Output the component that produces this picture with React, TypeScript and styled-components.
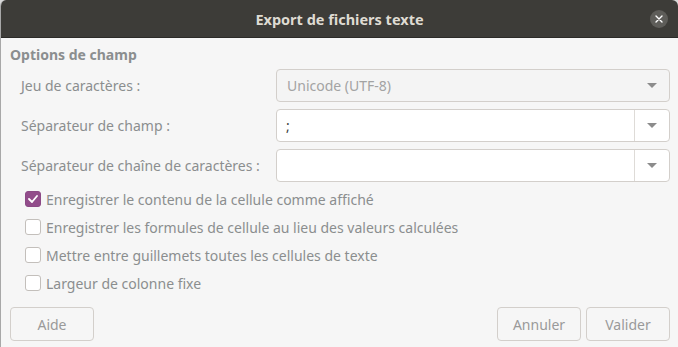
import React from 'react';
import styled, { createGlobalStyle } from 'styled-components';

const GlobalStyle = createGlobalStyle`
  html, body {
    margin: 0;
    padding: 0;
    background: #d9d9d9;
  }
  body {
    font-family: 'Noto Sans', 'DejaVu Sans', sans-serif;
    font-size: 14px;
  }
`;

const Window = styled.div`
  width: 678px;
  height: 347px;
  display: flex;
  flex-direction: column;
  background: #f6f6f6;
  border-radius: 6px 6px 0 0;
  border-left: 1px solid #a8a8a8;
  box-sizing: border-box;
  overflow: hidden;
`;

const TitleBar = styled.div`
  height: 37px;
  flex: none;
  background: #3d3c38;
  display: flex;
  align-items: center;
  justify-content: center;
  position: relative;
  border-bottom: 1px solid #2c2b28;
`;

const Title = styled.span`
  color: #dfdbd2;
  font-weight: bold;
  font-size: 14.5px;
`;

const CloseButton = styled.div`
  position: absolute;
  right: 10px;
  top: 10px;
  width: 18px;
  height: 18px;
  border-radius: 50%;
  background: #5e5d59;
  display: flex;
  align-items: center;
  justify-content: center;
`;

const Content = styled.div`
  flex: 1;
  display: flex;
  flex-direction: column;
  padding: 8px 8px 6px 9px;
`;

const SectionTitle = styled.div`
  color: #8b8e8f;
  font-weight: bold;
  font-size: 14px;
  line-height: 18px;
  margin-bottom: 5px;
`;

const FieldGrid = styled.div`
  display: grid;
  grid-template-columns: 255px 1fr;
  row-gap: 7px;
  padding-left: 11px;
`;

const Label = styled.div`
  color: #8b8e8f;
  display: flex;
  align-items: center;
`;

const ComboButton = styled.div`
  height: 33px;
  box-sizing: border-box;
  border: 1px solid #d3cfcb;
  border-radius: 4px;
  background: #f4f4f4;
  display: flex;
  align-items: center;
  padding: 0 12px 0 10px;
  color: #a3a3a3;
`;

const ComboEntry = styled.div`
  height: 33px;
  box-sizing: border-box;
  border: 1px solid #d3cfcb;
  border-radius: 4px;
  background: #ffffff;
  display: flex;
  align-items: stretch;
  overflow: hidden;
`;

const EntryText = styled.div`
  flex: 1;
  display: flex;
  align-items: center;
  padding: 0 9px;
  color: #3c3c3c;
`;

const ArrowCell = styled.div`
  width: 34px;
  border-left: 1px solid #dedbd7;
  display: flex;
  align-items: center;
  justify-content: center;
`;

const Arrow = styled.span<{ $push?: boolean }>`
  width: 0;
  height: 0;
  border-left: 5px solid transparent;
  border-right: 5px solid transparent;
  border-top: 5px solid #8c8c8c;
  margin-left: ${(p) => (p.$push ? 'auto' : '0')};
`;

const CheckList = styled.div`
  display: flex;
  flex-direction: column;
  padding-left: 15px;
  margin-top: 6px;
  gap: 6px;
`;

const CheckRow = styled.div`
  display: flex;
  align-items: center;
  height: 22px;
  gap: 5px;
  color: #8b8e8f;
`;

const Box = styled.div<{ $checked?: boolean }>`
  width: 16px;
  height: 16px;
  box-sizing: border-box;
  border-radius: 3px;
  border: 1px solid ${(p) => (p.$checked ? '#8c4a86' : '#c3bfbb')};
  background: ${(p) => (p.$checked ? '#924d8b' : '#ffffff')};
  display: flex;
  align-items: center;
  justify-content: center;
`;

const Footer = styled.div`
  margin-top: auto;
  display: flex;
  align-items: center;
  gap: 5px;
`;

const Button = styled.div`
  width: 84px;
  height: 34px;
  box-sizing: border-box;
  border: 1px solid #d3cfcb;
  border-radius: 4px;
  background: #f6f6f6;
  color: #9a9a9a;
  display: flex;
  align-items: center;
  justify-content: center;
`;

const Spacer = styled.div`
  flex: 1;
`;

const checks = [
  { label: 'Enregistrer le contenu de la cellule comme affiché', checked: true },
  { label: 'Enregistrer les formules de cellule au lieu des valeurs calculées', checked: false },
  { label: 'Mettre entre guillemets toutes les cellules de texte', checked: false },
  { label: 'Largeur de colonne fixe', checked: false },
];

const App = () => {
  return (
    <>
      <GlobalStyle />
      <Window>
        <TitleBar>
          <Title>Export de fichiers texte</Title>
          <CloseButton>
            <svg width="8" height="8" viewBox="0 0 8 8">
              <path d="M1 1 L7 7 M7 1 L1 7" stroke="#ffffff" strokeWidth="1.4" strokeLinecap="round" />
            </svg>
          </CloseButton>
        </TitleBar>
        <Content>
          <SectionTitle>Options de champ</SectionTitle>
          <FieldGrid>
            <Label>Jeu de caractères :</Label>
            <ComboButton>
              Unicode (UTF-8)
              <Arrow $push />
            </ComboButton>

            <Label>Séparateur de champ :</Label>
            <ComboEntry>
              <EntryText>;</EntryText>
              <ArrowCell>
                <Arrow />
              </ArrowCell>
            </ComboEntry>

            <Label>Séparateur de chaîne de caractères :</Label>
            <ComboEntry>
              <EntryText />
              <ArrowCell>
                <Arrow />
              </ArrowCell>
            </ComboEntry>
          </FieldGrid>

          <CheckList>
            {checks.map((item) => (
              <CheckRow key={item.label}>
                <Box $checked={item.checked}>
                  {item.checked && (
                    <svg width="10" height="8" viewBox="0 0 10 8">
                      <path d="M1 4 L4 7 L9 1" fill="none" stroke="#ffffff" strokeWidth="1.8" strokeLinecap="round" strokeLinejoin="round" />
                    </svg>
                  )}
                </Box>
                {item.label}
              </CheckRow>
            ))}
          </CheckList>

          <Footer>
            <Button>Aide</Button>
            <Spacer />
            <Button>Annuler</Button>
            <Button>Valider</Button>
          </Footer>
        </Content>
      </Window>
    </>
  );
};

export default App;
